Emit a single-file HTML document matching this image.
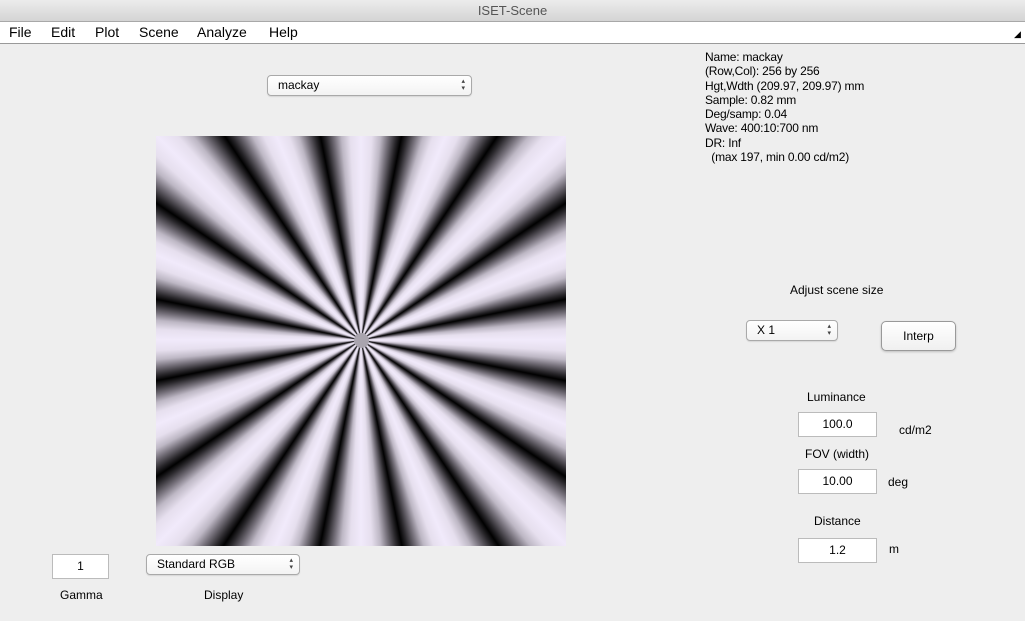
<!DOCTYPE html>
<html><head><meta charset="utf-8"><style>
*{margin:0;padding:0;box-sizing:border-box}
body{width:1025px;height:621px;overflow:hidden;background:#eeeeee;font-family:"Liberation Sans",sans-serif;position:relative;font-size:12px;color:#000}
.title{position:absolute;left:0;top:0;width:1025px;height:22px;background:linear-gradient(#ececec,#d4d4d4);border-bottom:1px solid #a8a8a8;text-align:center;font-size:13px;line-height:22px;color:#555}
.menu{position:absolute;left:0;top:22px;width:1025px;height:22px;background:#fff;border-bottom:1px solid #999;font-size:14px;line-height:21px}
.menu span{position:absolute;top:0}
.abs{position:absolute}
.pop{position:absolute;height:21px;border:1px solid #a9a9a9;border-radius:4px;background:linear-gradient(#fff,#f3f3f3);font-size:12px;line-height:19px;padding-left:10px;box-shadow:0 1px 1px rgba(0,0,0,.1)}
.pop:after{content:"▴\A▾";white-space:pre;position:absolute;right:6px;top:2px;font-size:7px;line-height:7px;color:#444}
.edit{position:absolute;height:25px;border:1px solid #bbb;background:#fff;text-align:center;line-height:23px;font-size:12px}
.img{position:absolute;left:156px;top:136px;width:410px;height:410px;background:repeating-conic-gradient(from 0deg at 205px 204px,#f1eafb 0deg,#e6dfee 3deg,#bdb7c4 5.5deg,#77727c 7.5deg,#2a282c 9.8deg,#000 11.25deg,#2a282c 12.7deg,#77727c 15deg,#bdb7c4 17deg,#e6dfee 19.5deg,#f1eafb 22.5deg)}
.dot{position:absolute;left:354px;top:333px;width:15px;height:15px;border-radius:50%;background:#a9a4ae;z-index:5}
</style></head><body>
<div class="title">ISET-Scene</div>
<div class="menu"><span style="left:9px">File</span><span style="left:51px">Edit</span><span style="left:95px">Plot</span><span style="left:139px">Scene</span><span style="left:197px">Analyze</span><span style="left:269px">Help</span><span style="left:1014px;font-size:9px;top:2px">◢</span></div>
<div class="pop" style="left:267px;top:75px;width:205px">mackay</div>
<div class="img"></div><div class="dot"></div>
<div class="abs" style="left:705px;top:50px;font-size:12px;line-height:14.3px;letter-spacing:-0.2px">Name: mackay<br>(Row,Col): 256 by 256<br>Hgt,Wdth (209.97, 209.97) mm<br>Sample: 0.82 mm<br>Deg/samp: 0.04<br>Wave: 400:10:700 nm<br>DR: Inf<br>&nbsp;&nbsp;(max 197, min 0.00 cd/m2)</div>
<div class="abs" style="left:790px;top:283px">Adjust scene size</div>
<div class="pop" style="left:746px;top:320px;width:92px">X 1</div>
<div class="abs" style="left:881px;top:321px;width:75px;height:30px;border:1px solid #999;border-radius:5px;background:linear-gradient(#fff,#f0f0f0);text-align:center;line-height:28px;box-shadow:0 1px 2px rgba(0,0,0,.2)">Interp</div>
<div class="abs" style="left:807px;top:390px">Luminance</div>
<div class="edit" style="left:798px;top:412px;width:79px">100.0</div>
<div class="abs" style="left:899px;top:423px">cd/m2</div>
<div class="abs" style="left:805px;top:447px">FOV (width)</div>
<div class="edit" style="left:798px;top:469px;width:79px">10.00</div>
<div class="abs" style="left:888px;top:475px">deg</div>
<div class="abs" style="left:814px;top:514px">Distance</div>
<div class="edit" style="left:798px;top:538px;width:79px">1.2</div>
<div class="abs" style="left:889px;top:542px">m</div>
<div class="edit" style="left:52px;top:554px;width:57px">1</div>
<div class="abs" style="left:60px;top:588px">Gamma</div>
<div class="pop" style="left:146px;top:554px;width:154px">Standard RGB</div>
<div class="abs" style="left:204px;top:588px">Display</div>
</body></html>
